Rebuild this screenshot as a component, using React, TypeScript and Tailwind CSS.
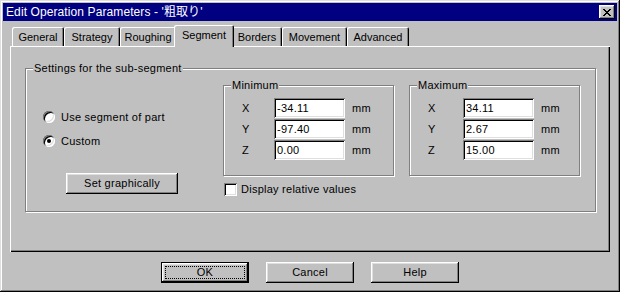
import React from 'react';

const raised =
  'shadow-[inset_-1px_-1px_#000,inset_1px_1px_#fff,inset_-2px_-2px_#808080,inset_2px_2px_#dfdfdf]';
const sunken =
  'shadow-[inset_1px_1px_#808080,inset_-1px_-1px_#fff,inset_2px_2px_#000,inset_-2px_-2px_#dfdfdf]';

const tabs = [
  { label: 'General', w: 'w-[52px]' },
  { label: 'Strategy', w: 'w-[56px]' },
  { label: 'Roughing', w: 'w-[56px]' },
  { label: 'Segment', w: 'w-[60px]', active: true },
  { label: 'Borders', w: 'w-[50px]' },
  { label: 'Movement', w: 'w-[65px]' },
  { label: 'Advanced', w: 'w-[62px]' },
];

function Radio({ checked, label }: { checked?: boolean; label: string }) {
  return (
    <div className="flex items-center h-[16px]">
      <span
        className={`relative w-[12px] h-[12px] rounded-full bg-white ${sunken} flex items-center justify-center`}
      >
        {checked && <span className="w-[4px] h-[4px] rounded-full bg-black" />}
      </span>
      <span className="ml-[6px]">{label}</span>
    </div>
  );
}

function Group({
  title,
  className,
  children,
}: {
  title: string;
  className: string;
  children?: React.ReactNode;
}) {
  return (
    <div
      className={`relative border border-[#808080] shadow-[inset_1px_1px_#fff,1px_1px_#fff] ${className}`}
    >
      <span className="absolute -top-[8px] left-[7px] bg-[#c0c0c0] px-[1px] leading-[14px]">
        {title}
      </span>
      {children}
    </div>
  );
}

function Coords({ values, inputLeft }: { values: string[]; inputLeft: string }) {
  return (
    <div className="flex flex-col gap-[1px] pt-[12px]">
      {['X', 'Y', 'Z'].map((axis, i) => (
        <div key={axis} className="flex items-center h-[20px]">
          <span className={`pl-[18px] ${inputLeft}`}>{axis}</span>
          <span className={`w-[71px] h-[20px] bg-white ${sunken} pl-[3px] leading-[20px]`}>
            {values[i]}
          </span>
          <span className="ml-[7px]">mm</span>
        </div>
      ))}
    </div>
  );
}

function Button({ label, focused }: { label: string; focused?: boolean }) {
  if (focused) {
    return (
      <div className="w-[88px] h-[21px] border border-black">
        <div className={`w-full h-full ${raised} flex items-center justify-center p-[3px]`}>
          <div className="w-full h-full border border-dotted border-black flex items-center justify-center">
            {label}
          </div>
        </div>
      </div>
    );
  }
  return (
    <div className={`w-[88px] h-[21px] ${raised} flex items-center justify-center`}>{label}</div>
  );
}

export default function App() {
  return (
    <div
      className="w-[620px] h-[292px] bg-[#c0c0c0] text-black text-[11px] tracking-[0.25px] shadow-[inset_-1px_-1px_#000,inset_1px_1px_#dfdfdf,inset_-2px_-2px_#808080,inset_2px_2px_#fff] p-[3px] flex flex-col overflow-hidden"
      style={{ fontFamily: '"Liberation Sans", "Noto Sans CJK JP", sans-serif' }}
    >
      {/* Title bar */}
      <div className="h-[18px] bg-[#000080] flex items-center pl-[3px] pr-[2px]">
        <span className="text-white text-[12px] tracking-[0.1px]">
          Edit Operation Parameters - '粗取り'
        </span>
        <div
          className={`ml-auto w-[16px] h-[14px] bg-[#c0c0c0] ${raised} flex items-center justify-center`}
        >
          <svg width="8" height="7" viewBox="0 0 8 7">
            <path d="M0 0h2v1h1v1h2v-1h1v-1h2v1h-1v1h-1v1h-1v1h1v1h1v1h1v1h-2v-1h-1v-1h-2v1h-1v1h-2v-1h1v-1h1v-1h1v-1h-1v-1h-1v-1h-1z" fill="#000" />
          </svg>
        </div>
      </div>

      <div className="px-[7px] pt-[4px] flex flex-col">
        {/* Tab strip */}
        <div className="flex items-end h-[21px] pl-[2px] relative z-10 tracking-normal">
          {tabs.map((t) =>
            t.active ? (
              <div
                key={t.label}
                className={`${t.w} -mx-[2px] h-[22px] -mb-[1px] bg-[#c0c0c0] rounded-t-[2px] shadow-[inset_1px_1px_#fff,inset_-1px_0_#000,inset_-2px_0_#808080] flex items-center justify-center pb-[2px] relative`}
              >
                {t.label}
              </div>
            ) : (
              <div
                key={t.label}
                className={`${t.w} h-[19px] rounded-t-[2px] shadow-[inset_1px_1px_#fff,inset_-1px_0_#000,inset_-2px_0_#808080] flex items-center justify-center pt-[1px]`}
              >
                {t.label}
              </div>
            ),
          )}
        </div>

        {/* Tab panel */}
        <div className="w-[600px] h-[206px] shadow-[inset_1px_1px_#fff,inset_-1px_-1px_#000,inset_-2px_-2px_#808080] pt-[22px] pl-[15px]">
          <Group title="Settings for the sub-segment" className="w-[571px] h-[144px] flex">
            {/* left column */}
            <div className="w-[197px] flex flex-col pl-[17px] pt-[40px]">
              <div className="flex flex-col gap-[8px]">
                <Radio label="Use segment of part" />
                <Radio checked label="Custom" />
              </div>
              <div className="pl-[23px] pt-[24px]">
                <div className={`w-[112px] h-[21px] ${raised} flex items-center justify-center`}>
                  Set graphically
                </div>
              </div>
            </div>

            {/* right column */}
            <div className="flex flex-col pt-[16px]">
              <div className="flex gap-[15px]">
                <Group title="Minimum" className="w-[171px] h-[91px]">
                  <Coords values={['-34.11', '-97.40', '0.00']} inputLeft="w-[50px]" />
                </Group>
                <Group title="Maximum" className="w-[171px] h-[91px]">
                  <Coords values={['34.11', '2.67', '15.00']} inputLeft="w-[53px]" />
                </Group>
              </div>
              <div className="flex items-center mt-[5px] ml-[1px]">
                <span className={`w-[13px] h-[13px] bg-white ${sunken}`} />
                <span className="ml-[4px]">Display relative values</span>
              </div>
            </div>
          </Group>
        </div>

        {/* Buttons */}
        <div className="flex justify-center gap-[17px] pt-[10px]">
          <Button label="OK" focused />
          <Button label="Cancel" />
          <Button label="Help" />
        </div>
      </div>
    </div>
  );
}
